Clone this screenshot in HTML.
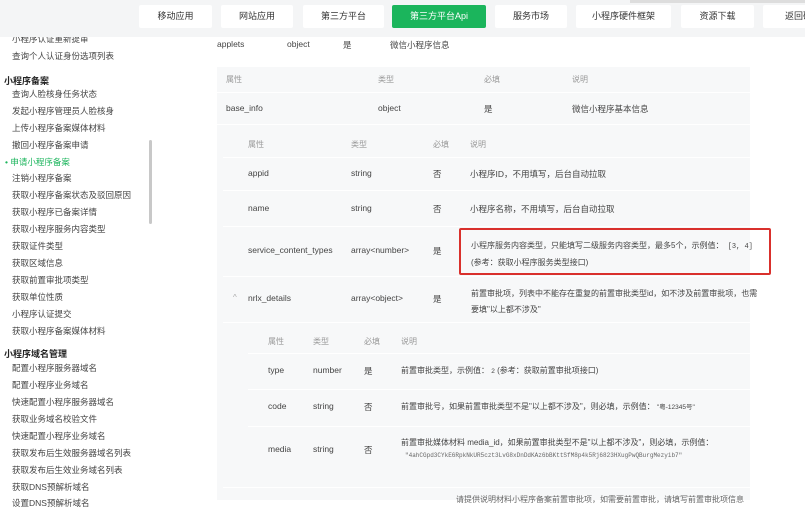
<!DOCTYPE html>
<html><head><meta charset="utf-8"><style>
*{margin:0;padding:0;box-sizing:border-box}
body{width:805px;height:500px;overflow:hidden;background:#fff;font-family:"Liberation Sans","Noto Sans CJK SC",sans-serif;color:#444;position:relative}
.a{position:absolute;white-space:nowrap}
.nav{position:absolute;left:0;top:0;width:805px;height:37px;background:#f4f5f6;z-index:2}
.btn{position:absolute;top:5px;height:23px;background:#fff;border-radius:2px;font-size:9px;line-height:23px;text-align:center;color:#333;z-index:3}
.sb{font-size:8.5px;color:#444;left:12px}
.sh{font-size:9px;color:#222;left:4px;font-weight:bold}
.t{font-size:8.5px;color:#444}
.h{font-size:8px;color:#999}
.bg{position:absolute;background:#f7f8f9}
.ln{position:absolute;height:1px;background:#fff}
</style></head><body>
<div class="nav"></div>
<div class="a" style="left:630px;top:0;width:175px;height:3px;background:#ddd;z-index:3"></div>
<div class="btn" style="left:139px;width:73px">移动应用</div>
<div class="btn" style="left:221px;width:72px">网站应用</div>
<div class="btn" style="left:303px;width:81px">第三方平台</div>
<div class="btn" style="left:392px;width:94px;background:#1bb55c;color:#fff">第三方平台Api</div>
<div class="btn" style="left:495px;width:72px">服务市场</div>
<div class="btn" style="left:576px;width:95px">小程序硬件框架</div>
<div class="btn" style="left:681px;width:73px">资源下载</div>
<div class="btn" style="left:763px;width:60px;text-align:left;padding-left:22px">返回码</div>

<div class="a sb" style="top:33px">小程序认证重新提审</div>
<div class="a sb" style="top:50px">查询个人认证身份选项列表</div>
<div class="a sh" style="top:74px">小程序备案</div>
<div class="a sb" style="top:88px">查询人脸核身任务状态</div>
<div class="a sb" style="top:105px">发起小程序管理员人脸核身</div>
<div class="a sb" style="top:122px">上传小程序备案媒体材料</div>
<div class="a sb" style="top:139px">撤回小程序备案申请</div>
<div class="a" style="left:5px;top:156px;font-size:8.5px;color:#1bb55c">• 申请小程序备案</div>
<div class="a sb" style="top:172px">注销小程序备案</div>
<div class="a sb" style="top:189px">获取小程序备案状态及驳回原因</div>
<div class="a sb" style="top:206px">获取小程序已备案详情</div>
<div class="a sb" style="top:223px">获取小程序服务内容类型</div>
<div class="a sb" style="top:240px">获取证件类型</div>
<div class="a sb" style="top:257px">获取区域信息</div>
<div class="a sb" style="top:274px">获取前置审批项类型</div>
<div class="a sb" style="top:291px">获取单位性质</div>
<div class="a sb" style="top:308px">小程序认证提交</div>
<div class="a sb" style="top:325px">获取小程序备案媒体材料</div>
<div class="a sh" style="top:347px">小程序域名管理</div>
<div class="a sb" style="top:362px">配置小程序服务器域名</div>
<div class="a sb" style="top:379px">配置小程序业务域名</div>
<div class="a sb" style="top:396px">快速配置小程序服务器域名</div>
<div class="a sb" style="top:413px">获取业务域名校验文件</div>
<div class="a sb" style="top:430px">快速配置小程序业务域名</div>
<div class="a sb" style="top:447px">获取发布后生效服务器域名列表</div>
<div class="a sb" style="top:464px">获取发布后生效业务域名列表</div>
<div class="a sb" style="top:481px">获取DNS预解析域名</div>
<div class="a sb" style="top:497px">设置DNS预解析域名</div>
<div class="a" style="left:149px;top:140px;width:3px;height:84px;background:#c8c8c8;border-radius:2px"></div>

<div class="a t" style="left:217px;top:39px">applets</div>
<div class="a t" style="left:287px;top:39px">object</div>
<div class="a t" style="left:343px;top:39px">是</div>
<div class="a t" style="left:390px;top:39px">微信小程序信息</div>

<div class="bg" style="left:217px;top:67px;width:533px;height:433px"></div>
<div class="ln" style="left:217px;top:92px;width:533px"></div>
<div class="ln" style="left:217px;top:124px;width:533px"></div>
<div class="a h" style="left:226px;top:74px">属性</div>
<div class="a h" style="left:378px;top:74px">类型</div>
<div class="a h" style="left:484px;top:74px">必填</div>
<div class="a h" style="left:572px;top:74px">说明</div>
<div class="a t" style="left:226px;top:103px">base_info</div>
<div class="a t" style="left:378px;top:103px">object</div>
<div class="a t" style="left:484px;top:103px">是</div>
<div class="a t" style="left:572px;top:103px">微信小程序基本信息</div>

<div class="ln" style="left:223px;top:157px;width:527px"></div>
<div class="ln" style="left:223px;top:190px;width:527px"></div>
<div class="ln" style="left:223px;top:226px;width:527px"></div>
<div class="ln" style="left:223px;top:276px;width:527px"></div>
<div class="ln" style="left:223px;top:322px;width:527px"></div>
<div class="a h" style="left:248px;top:139px">属性</div>
<div class="a h" style="left:351px;top:139px">类型</div>
<div class="a h" style="left:433px;top:139px">必填</div>
<div class="a h" style="left:470px;top:139px">说明</div>
<div class="a t" style="left:248px;top:168px">appid</div><div class="a t" style="left:351px;top:168px">string</div><div class="a t" style="left:433px;top:168px">否</div><div class="a t" style="left:470px;top:168px">小程序ID，不用填写，后台自动拉取</div>
<div class="a t" style="left:248px;top:203px">name</div><div class="a t" style="left:351px;top:203px">string</div><div class="a t" style="left:433px;top:203px">否</div><div class="a t" style="left:470px;top:203px">小程序名称，不用填写，后台自动拉取</div>
<div class="a t" style="left:248px;top:245px">service_content_types</div><div class="a t" style="left:351px;top:245px">array&lt;number&gt;</div><div class="a t" style="left:433px;top:245px">是</div>
<div class="a t" style="left:471px;top:238px;font-size:8px;line-height:16px">小程序服务内容类型，只能填写二级服务内容类型，最多5个，示例值：<span style="font-family:'Liberation Mono',monospace;font-size:7px"> [3, 4]</span><br>(参考：获取小程序服务类型接口)</div>
<div class="a" style="left:459px;top:228px;width:312px;height:47px;border:2px solid #d9302c;border-radius:2px"></div>
<div class="a" style="left:233px;top:293px;font-size:8px;color:#aaa">^</div>
<div class="a t" style="left:248px;top:293px">nrlx_details</div><div class="a t" style="left:351px;top:293px">array&lt;object&gt;</div><div class="a t" style="left:433px;top:293px">是</div>
<div class="a t" style="left:471px;top:286px;font-size:8px;line-height:16px">前置审批项，列表中不能存在重复的前置审批类型id，如不涉及前置审批项，也需<br>要填"以上都不涉及"</div>

<div class="ln" style="left:248px;top:353px;width:502px"></div>
<div class="ln" style="left:248px;top:389px;width:502px"></div>
<div class="ln" style="left:248px;top:426px;width:502px"></div>
<div class="ln" style="left:223px;top:487px;width:527px"></div>
<div class="a h" style="left:268px;top:336px">属性</div>
<div class="a h" style="left:313px;top:336px">类型</div>
<div class="a h" style="left:364px;top:336px">必填</div>
<div class="a h" style="left:401px;top:336px">说明</div>
<div class="a t" style="left:268px;top:365px">type</div><div class="a t" style="left:313px;top:365px">number</div><div class="a t" style="left:364px;top:365px">是</div><div class="a t" style="left:401px;top:365px;font-size:8px">前置审批类型，示例值： <span style="font-size:6.5px">2</span> (参考：获取前置审批项接口)</div>
<div class="a t" style="left:268px;top:401px">code</div><div class="a t" style="left:313px;top:401px">string</div><div class="a t" style="left:364px;top:401px">否</div><div class="a t" style="left:401px;top:401px;font-size:8px">前置审批号，如果前置审批类型不是"以上都不涉及"，则必填，示例值： <span style="font-size:6.5px">"粤-12345号"</span></div>
<div class="a t" style="left:268px;top:444px">media</div><div class="a t" style="left:313px;top:444px">string</div><div class="a t" style="left:364px;top:444px">否</div>
<div class="a t" style="left:401px;top:437px;font-size:8px">前置审批媒体材料 media_id，如果前置审批类型不是"以上都不涉及"，则必填，示例值：</div>
<div class="a" style="left:405px;top:452px;font-size:6px;color:#666;font-family:'Liberation Mono',monospace">"4ahCGpd3CYkE6RpkNkUR5czt3LvG8xDnDdKAz6bBKttSfM8p4k5Rj6823HXugPwQBurgMezyib7"</div>
<div class="a t" style="left:456px;top:494px;font-size:8px;color:#666">请提供说明材料小程序备案前置审批项，如需要前置审批，请填写前置审批项信息</div>
</body></html>
